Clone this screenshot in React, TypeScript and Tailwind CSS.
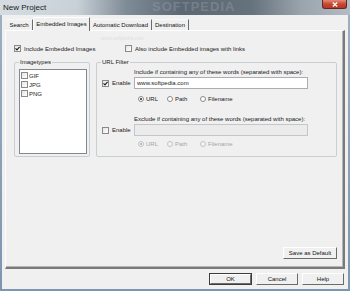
import React from 'react';

const font = { fontFamily: '"Liberation Sans", Arial, sans-serif' };

// small win7 style checkbox
function Check({ checked = false, disabled = false }: { checked?: boolean; disabled?: boolean }) {
  return (
    <div
      className={`w-[7px] h-[7px] shrink-0 border flex items-center justify-center ${
        disabled ? 'border-[#c4c4c4] bg-[#f4f4f4]' : 'border-[#8a8a8a] bg-gradient-to-br from-[#e4e4e4] to-[#ffffff]'
      }`}
    >
      {checked && (
        <svg width="5" height="5" viewBox="0 0 5 5">
          <path d="M0.5 2.4 L2 3.9 L4.6 0.8" stroke="#222" strokeWidth="1.2" fill="none" />
        </svg>
      )}
    </div>
  );
}

function Radio({ checked = false, disabled = false }: { checked?: boolean; disabled?: boolean }) {
  return (
    <div
      className={`w-[6px] h-[6px] shrink-0 rounded-full border flex items-center justify-center ${
        disabled ? 'border-[#c2c2c2] bg-[#f4f4f4]' : 'border-[#8a8a8a] bg-white'
      }`}
    >
      {checked && (
        <div className={`w-[2px] h-[2px] rounded-full ${disabled ? 'bg-[#a8a8a8]' : 'bg-[#222]'}`} />
      )}
    </div>
  );
}

function RadioRow({ disabled = false }: { disabled?: boolean }) {
  const txt = disabled ? 'text-[#a6a6a6]' : 'text-[#1a1a1a]';
  return (
    <div className={`flex items-center h-[10px] pl-[4px] ${txt}`}>
      <div className="flex items-center gap-[2px] w-[29px]">
        <Radio checked disabled={disabled} />
        <span>URL</span>
      </div>
      <div className="flex items-center gap-[2px] w-[33px]">
        <Radio disabled={disabled} />
        <span>Path</span>
      </div>
      <div className="flex items-center gap-[2px]">
        <Radio disabled={disabled} />
        <span>Filename</span>
      </div>
    </div>
  );
}

function Group({ label, className, children }: { label: string; className: string; children: React.ReactNode }) {
  return (
    <div className={`relative border border-[#c9ced3] rounded-[2px] ${className}`}>
      <span className="absolute -top-[5px] left-[4px] px-[1px] bg-[#f0f0f0] leading-[8px] text-[#1a1a1a]">{label}</span>
      {children}
    </div>
  );
}

function Btn({ label, width, isDefault = false }: { label: string; width: string; isDefault?: boolean }) {
  return (
    <div className={`${width} h-[12px] ${isDefault ? 'border border-[#3c3c3c]' : ''}`}>
      <div className="w-full h-full flex items-center justify-center bg-[#f0f0f0] border-t border-l border-t-white border-l-white border-r border-b border-r-[#6b6b6b] border-b-[#6b6b6b] text-[#111]">
        {label}
      </div>
    </div>
  );
}

function Tab({ label, width, selected = false }: { label: string; width: string; selected?: boolean }) {
  if (selected) {
    return (
      <div
        className={`${width} h-[14px] -mb-[1px] relative z-10 bg-[#f0f0f0] border-t border-l border-r border-t-white border-l-white border-r-[#6b6b6b] rounded-t-[1px] flex items-center justify-center pb-[1px] text-[#111]`}
      >
        {label}
      </div>
    );
  }
  return (
    <div
      className={`${width} h-[11px] border-t border-r border-t-[#f8f8f8] border-r-[#6b6b6b] flex items-center justify-center text-[#111]`}
    >
      {label}
    </div>
  );
}

export default function App() {
  return (
    <div
      className="w-[350px] h-[291px] flex flex-col overflow-hidden bg-gradient-to-b from-[#9fb0c2] to-[#7d95ae] text-[6px] leading-[8px]"
      style={font}
    >
      {/* title bar */}
      <div className="relative h-[15px] flex items-center pl-[3px] bg-[linear-gradient(90deg,#d5dce2_0%,#c9d1d8_22%,#7f8b96_36%,#5b6772_52%,#66727c_72%,#9aa4ad_86%,#b3bcc4_100%)]">
        <span className="text-[8px] leading-[10px] text-[#1b1b1b] relative z-10">New Project</span>
        <span className="absolute left-[152px] top-0 text-[13px] leading-[13px] font-bold tracking-[1px] text-[#9aa4ad]/40">
          SOFTPEDIA
        </span>
        <div className="absolute right-[3px] top-0 w-[25px] h-[9px] rounded-b-[3px] border border-t-0 border-[#5e2a22] bg-gradient-to-b from-[#e08a78] via-[#c8462f] to-[#b73a25] flex items-center justify-center">
          <svg width="6" height="5" viewBox="0 0 6 5">
            <path d="M0.8 0.5 L5.2 4.5 M5.2 0.5 L0.8 4.5" stroke="#fff" strokeWidth="1.3" />
          </svg>
        </div>
      </div>

      {/* client */}
      <div className="flex-1 mx-[2px] mb-[2px] bg-[#f0f0f0] flex flex-col pl-[3px] pr-[3px] pt-[2px]">
        {/* tabs */}
        <div className="h-[13px] flex items-end pl-[1px]">
          <Tab label="Search" width="w-[27px]" />
          <Tab label="Embedded Images" width="w-[57px]" selected />
          <Tab label="Automatic Download" width="w-[62px]" />
          <Tab label="Destination" width="w-[37px]" />
        </div>

        {/* tab panel */}
        <div className="relative h-[239px] flex flex-col bg-[#f0f0f0] border-t border-l border-t-white border-l-[#fdfdfd] border-r-2 border-b-2 border-r-[#7a7a7a] border-b-[#7a7a7a] shadow-[inset_-1px_-1px_0_#b5b5b5]">
          <span className="absolute left-[95px] top-[3px] text-[5px] text-[#e0e0e0]">www.softpedia.com</span>

          <div className="mt-[13px] h-[9px] flex items-center pl-[8px] text-[#1a1a1a]">
            <div className="w-[111px] flex items-center gap-[3px]">
              <Check checked />
              <span>Include Embedded Images</span>
            </div>
            <div className="flex items-center gap-[3px]">
              <Check />
              <span>Also include Embedded images with links</span>
            </div>
          </div>

          <div className="mt-[9px] flex pl-[8px]">
            <Group label="Imagetypes" className="w-[76px] h-[95px] pt-[6px] pl-[4px] pr-[2px] pb-[2px]">
              <div className="h-full bg-white border border-[#828790] pt-[1px] pl-[1px] text-[#1a1a1a]">
                {['GIF', 'JPG', 'PNG'].map((t) => (
                  <div key={t} className="h-[9px] flex items-center gap-[1px]">
                    <Check />
                    <span>{t}</span>
                  </div>
                ))}
              </div>
            </Group>

            <Group label="URL Filter" className="ml-[6px] w-[241px] h-[95px] pt-[5px]">
              <div className="grid grid-cols-[37px_174px] text-[#1a1a1a]">
                <div />
                <div className="h-[8px] flex items-center">Include if containing any of these words (separated with space):</div>

                <div className="mt-[1px] h-[12px] flex items-center gap-[3px] pl-[5px]">
                  <Check checked />
                  <span>Enable</span>
                </div>
                <div className="mt-[1px] h-[12px] bg-white border border-[#abadb3] flex items-center pl-[2px]">
                  www.softpedia.com
                </div>

                <div />
                <div className="mt-[5px]">
                  <RadioRow />
                </div>

                <div />
                <div className="mt-[11px] h-[8px] flex items-center">Exclude if containing any of these words (separated with space):</div>

                <div className="mt-[1px] h-[12px] flex items-center gap-[3px] pl-[5px]">
                  <Check />
                  <span>Enable</span>
                </div>
                <div className="mt-[1px] h-[12px] bg-[#ebebeb] border border-[#c4c6ca]" />

                <div />
                <div className="mt-[3px]">
                  <RadioRow disabled />
                </div>
              </div>
            </Group>
          </div>

          <div className="mt-auto mb-[8px] mr-[6px] flex justify-end">
            <Btn label="Save as Default" width="w-[54px]" />
          </div>
        </div>

        {/* dialog buttons */}
        <div className="mt-[4px] flex justify-end gap-[4px] pr-[1px]">
          <Btn label="OK" width="w-[43px]" isDefault />
          <Btn label="Cancel" width="w-[42px]" />
          <Btn label="Help" width="w-[42px]" />
        </div>
      </div>
    </div>
  );
}
